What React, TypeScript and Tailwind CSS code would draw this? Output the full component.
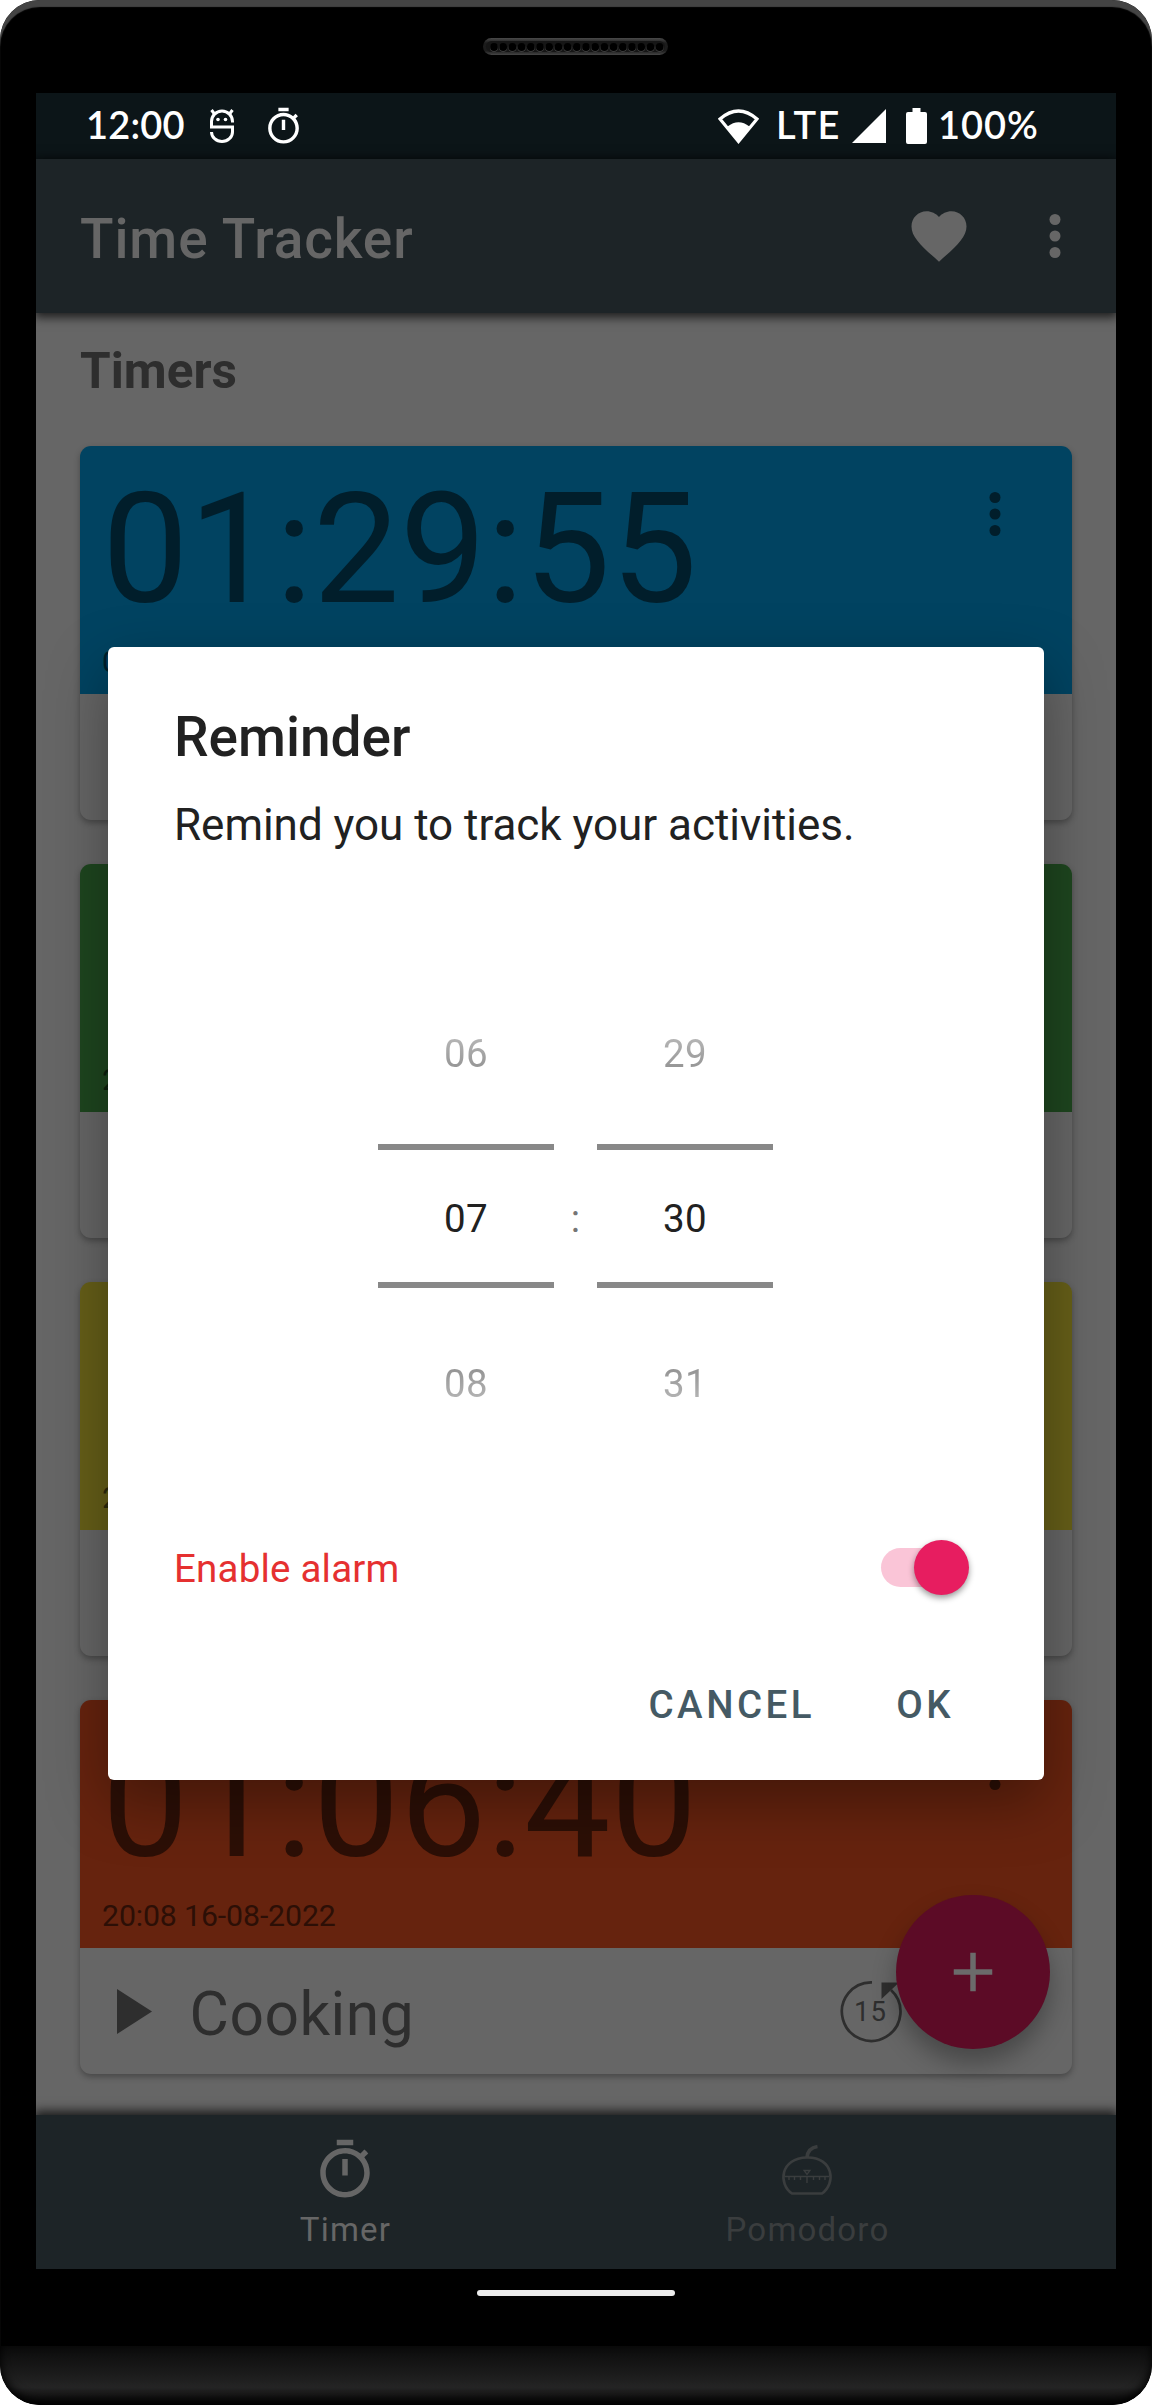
import type { ReactNode } from "react";

const TIMER_PATH =
  "M15 1H9v2h6V1zm-4 13h2V8h-2v6zm8.03-6.61l1.42-1.42c-.43-.51-.9-.99-1.41-1.41l-1.42 1.42C16.07 4.74 14.12 4 12 4c-4.97 0-9 4.03-9 9s4.02 9 9 9 9-4.03 9-9c0-2.12-.74-4.07-1.97-5.61zM12 20c-3.87 0-7-3.13-7-7s3.13-7 7-7 7 3.13 7 7-3.13 7-7 7z";

function TimerIcon({ className }: { className: string }) {
  return (
    <svg viewBox="0 0 24 24" className={className} fill="currentColor">
      <path d={TIMER_PATH} />
    </svg>
  );
}

function MoreIcon({ className }: { className: string }) {
  return (
    <svg viewBox="0 0 24 24" className={className} fill="currentColor">
      <circle cx="12" cy="6" r="2" />
      <circle cx="12" cy="12" r="2" />
      <circle cx="12" cy="18" r="2" />
    </svg>
  );
}

function Speaker() {
  return (
    <svg className="ml-[483px] mt-[38px] h-[17px] w-[185px] shrink-0" viewBox="0 0 185 17">
      <defs>
        <linearGradient id="rim" x1="0" y1="0" x2="0" y2="1">
          <stop offset="0" stopColor="#4a4a4a" />
          <stop offset="0.3" stopColor="#1c1c1c" />
          <stop offset="0.75" stopColor="#1c1c1c" />
          <stop offset="1" stopColor="#464646" />
        </linearGradient>
      </defs>
      <rect width="185" height="17" rx="8.5" fill="url(#rim)" />
      <rect x="3" y="3" width="179" height="11" rx="5.5" fill="#161616" />
      {Array.from({ length: 19 }, (_, i) => (
        <g key={i}>
          <circle cx={11 + i * 9.2} cy="9.8" r="4" fill="#4a4a4a" />
          <circle cx={11 + i * 9.2} cy="9" r="3.9" fill="#000" />
        </g>
      ))}
    </svg>
  );
}

function StatusBar() {
  return (
    <div className="flex h-[66px] shrink-0 items-center bg-[#0c1518] font-['Lato'] text-[38px] font-semibold leading-[62px] text-white">
      <span className="ml-[50px] w-[99px] pb-[4px] tracking-[0.2px]">12:00</span>
      <svg className="ml-[24px] h-[36px] w-[26px]" viewBox="0 0 26 36" fill="none" stroke="#fff" strokeWidth="3">
        <path d="M23.500 14.500v-1a10.500 10.500 0 0 0-21 0v5.500h21v5a10.500 9.500 0 0 1-21 0" />
        <path d="M2.500 2l3 4M23.500 2l-3 4" />
        <circle cx="9" cy="11.500" r="1.800" fill="#fff" stroke="none" />
        <circle cx="16.500" cy="11.500" r="1.800" fill="#fff" stroke="none" />
      </svg>
      <TimerIcon className="ml-[28px] h-[41px] w-[41px]" />
      <svg className="ml-[414px] h-[36px] w-[41px]" viewBox="0 0 41 36">
        <path d="M2 11Q20.500-5 39 11L20.500 33.500Z" fill="none" stroke="#fff" strokeWidth="3.200" />
        <path d="M9.500 18.500Q20.500 10 31.500 18.500L20.500 33Z" fill="#fff" />
      </svg>
      <span className="ml-[17px] w-[68px] pb-[4px] tracking-[1.400px]">LTE</span>
      <svg className="ml-[8px] h-[34px] w-[34px]" viewBox="0 0 34 34">
        <path d="M34 0V34H0Z" fill="#fff" />
      </svg>
      <svg className="ml-[20px] h-[36px] w-[21px]" viewBox="0 0 21 36">
        <path d="M6.500 0h8v4H19a2 2 0 0 1 2 2v28a2 2 0 0 1-2 2H2a2 2 0 0 1-2-2V6a2 2 0 0 1 2-2h4.500z" fill="#fff" />
      </svg>
      <span className="ml-[11px] pb-[4px] tracking-[1px]">100%</span>
    </div>
  );
}

function AppBar() {
  return (
    <div className="relative z-10 flex h-[154px] shrink-0 items-center bg-[#1d2427] pl-[44px] text-[#666] shadow-[0_2px_10px_2px_rgba(0,0,0,0.75)]">
      <span className="pt-[6px] text-[55px] font-medium leading-[64px] tracking-[0.900px]">Time Tracker</span>
      <svg viewBox="0 0 24 24" className="ml-auto mr-[50px] h-[66px] w-[66px]" fill="currentColor">
        <path d="M12 21.350l-1.450-1.320C5.400 15.360 2 12.280 2 8.500 2 5.420 4.420 3 7.500 3c1.740 0 3.410.810 4.500 2.090C13.090 3.810 14.760 3 16.500 3 19.580 3 22 5.420 22 8.500c0 3.780-3.400 6.860-8.550 11.540L12 21.350z" />
      </svg>
      <MoreIcon className="mr-[28px] h-[66px] w-[66px]" />
    </div>
  );
}

type TimerCardProps = {
  header: string;
  ink: string;
  time?: string;
  date: string;
  name?: string;
};

function TimerCard({ header, ink, time, date, name }: TimerCardProps) {
  return (
    <div className="flex h-[374px] shrink-0 flex-col overflow-hidden rounded-[11px] bg-[#666] shadow-[0_3px_6px_rgba(0,0,0,0.3)]">
      <div className={`flex h-[248px] flex-col px-[22px] ${header} ${ink}`}>
        <div className="flex h-[180px]">
          <span className="mt-[14px] text-[154px] leading-[180px] tracking-[0.200px]">{time}</span>
          <MoreIcon className="ml-auto mr-[22px] mt-[35px] h-[66px] w-[66px]" />
        </div>
        <span className="mt-[18px] text-[30.250px] leading-[36px] tracking-[-0.120px]">{date}</span>
      </div>
      <div className="flex h-[126px] items-center text-[#2e2e2e]">
        <svg className="ml-[36.500px] h-[45px] w-[36px]" viewBox="0 0 36 45">
          <path d="M0 0L35 22.500L0 45Z" fill="currentColor" />
        </svg>
        <span className="ml-[37px] pt-[7px] text-[60.500px] leading-[72px] tracking-[0.500px]">{name}</span>
        <svg className="ml-auto mr-[168.500px] h-[66px] w-[66px]" viewBox="0 0 66 66">
          <path d="M34 4.300A29.300 29.300 0 1 0 53 12" fill="none" stroke="currentColor" strokeWidth="2.700" />
          <path d="M43.500 4.500H61L43.500 21Z" fill="currentColor" />
          <text x="32.500" y="43" textAnchor="middle" fontSize="27.500" letterSpacing="1" fill="currentColor">15</text>
        </svg>
      </div>
    </div>
  );
}

function PomodoroIcon() {
  return (
    <svg className="h-[66px] w-[66px]" viewBox="0 0 66 66" fill="none" stroke="currentColor">
      <path d="M18 56.500C4 47 6 21 33 20.500S62 47 48 56.500Z" strokeWidth="2.600" strokeLinejoin="round" />
      <path d="M33 20.500C33.500 14 37 10.500 43.500 9.500" strokeWidth="3.600" />
      <path d="M11 39.500H55" strokeWidth="1.400" />
      <path d="M15 40v3M20.500 40v3M26.500 40v3M33 40v6M39.500 40v3M45.500 40v3M51 40v3" strokeWidth="1.400" />
      <path d="M30 33.500h6l-3 4Z" strokeWidth="1.300" />
    </svg>
  );
}

function NavItem({ icon, label, tone }: { icon: ReactNode; label: string; tone: string }) {
  return (
    <div className={`flex w-[462px] flex-col items-center pt-[22px] ${tone}`}>
      {icon}
      <span className="mt-[7px] pl-[2px] text-[33px] leading-[40px] tracking-[1.200px]">{label}</span>
    </div>
  );
}

function PickerColumn({ values }: { values: [string, string, string] }) {
  return (
    <div className="flex w-[176px] flex-col items-center text-[38.500px] leading-[46px] tracking-[0.400px]">
      <span className="-mt-px bg-gradient-to-b from-[#bdbdbd] to-[#8c8c8c] bg-clip-text text-transparent">{values[0]}</span>
      <div className="mt-[67px] flex h-[144px] w-full items-center justify-center border-y-[6px] border-[#888] text-[#212121]">
        <span className="mt-[6px]">{values[1]}</span>
      </div>
      <span className="mt-[73px] bg-gradient-to-b from-[#8c8c8c] to-[#bdbdbd] bg-clip-text text-transparent">{values[2]}</span>
    </div>
  );
}

function ReminderDialog() {
  return (
    <div className="absolute left-[72px] top-[554px] z-30 flex h-[1133px] w-[936px] flex-col rounded-[6px] bg-white px-[66px] text-[#212121] shadow-[0_22px_60px_rgba(0,0,0,0.35)]">
      <h2 className="mt-[58px] text-[55px] font-medium leading-[64px]">Reminder</h2>
      <p className="mt-[30px] text-[44px] leading-[52px] tracking-[-0.030px]">Remind you to track your activities.</p>
      <div className="mt-[181px] flex justify-center gap-[16px] pr-px">
        <PickerColumn values={["06", "07", "08"]} />
        <span className="mt-[164px] w-[11px] text-center text-[38.500px] leading-[46px] text-[#757575]">:</span>
        <PickerColumn values={["29", "30", "31"]} />
      </div>
      <div className="mt-[132px] flex h-[56px] items-center justify-between">
        <span className="pt-[4px] text-[38.500px] leading-[46px] tracking-[0.200px] text-[#e53030]">Enable alarm</span>
        <div className="relative mr-[9px] h-[39px] w-[88px]">
          <div className="h-[39px] w-[77px] rounded-full bg-[#fac5d7]" />
          <div className="absolute -top-[8px] right-0 h-[55px] w-[55px] rounded-full bg-[#e71d60] shadow-[0_3px_6px_rgba(0,0,0,0.4)]" />
        </div>
      </div>
      <div className="mt-[87px] flex justify-end gap-[81px] pr-[24px] text-[38.500px] font-medium leading-[46px] tracking-[3.500px] text-[#455a64]">
        <span>CANCEL</span>
        <span>OK</span>
      </div>
    </div>
  );
}

const CARDS: TimerCardProps[] = [
  { header: "bg-[#014361]", ink: "text-[#011e2b]", time: "01:29:55", date: "09:14 17-08-2022" },
  { header: "bg-[#1e461f]", ink: "text-[#0d200e]", date: "20:10 16-08-2022" },
  { header: "bg-[#665f18]", ink: "text-[#2d2a0b]", date: "20:09 16-08-2022" },
  { header: "bg-[#66230e]", ink: "text-[#2c0f06]", time: "01:06:40", date: "20:08 16-08-2022", name: "Cooking" },
];

export default function App() {
  return (
    <div className="h-[2405px] w-[1152px] bg-white font-['Roboto',sans-serif]">
      <div className="flex h-full flex-col overflow-hidden rounded-[40px] bg-black shadow-[inset_0_7px_1px_#444]">
        <Speaker />
        <div className="relative ml-[36px] mt-[38px] flex h-[2176px] w-[1080px] shrink-0 flex-col overflow-hidden bg-[#666]">
          <StatusBar />
          <AppBar />
          <div className="flex h-[1802px] shrink-0 flex-col px-[44px]">
            <h1 className="mt-[29px] h-[104px] shrink-0 text-[49.500px] font-bold leading-[58px] text-[#2e2e2e]">Timers</h1>
            <div className="flex flex-col gap-[44px]">
              {CARDS.map((card) => (
                <TimerCard key={card.date} {...card} />
              ))}
            </div>
          </div>
          <nav className="relative z-10 flex h-[154px] shrink-0 justify-center bg-[#1d2427] pr-px shadow-[0_-2px_10px_2px_rgba(0,0,0,0.750)]">
            <NavItem icon={<TimerIcon className="h-[66px] w-[66px]" />} label="Timer" tone="text-[#666]" />
            <NavItem icon={<PomodoroIcon />} label="Pomodoro" tone="text-[#3a3d3e]" />
          </nav>
          <button className="absolute bottom-[220px] right-[66px] flex h-[154px] w-[154px] items-center justify-center rounded-full bg-[#5c0b26] shadow-[0_14px_24px_rgba(0,0,0,0.3)]">
            <svg className="h-[66px] w-[66px]" viewBox="0 0 24 24" fill="#6b6b6b">
              <path d="M19 13h-6v6h-2v-6H5v-2h6V5h2v6h6v2z" />
            </svg>
          </button>
          <ReminderDialog />
        </div>
        <div className="ml-[477px] mt-[21px] h-[6px] w-[198px] shrink-0 rounded-full bg-[#ececec]" />
        <div className="mt-[50px] h-[59px] w-full shrink-0 rounded-b-[40px] bg-gradient-to-b from-[#0b0b0b] via-[#242424] via-70% to-[#080808] shadow-[inset_0_-4px_10px_#000]" />
      </div>
    </div>
  );
}
